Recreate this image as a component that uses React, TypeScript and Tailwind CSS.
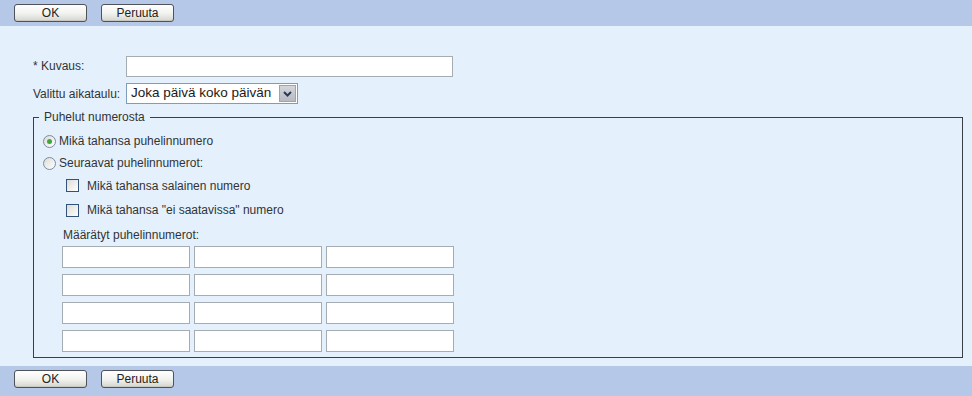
const font = { fontFamily: '"Liberation Sans", Arial, sans-serif' };

function Btn({ label }: { label: string }) {
  return (
    <button className="w-[73px] h-[18px] rounded-[3px] border border-[#4f5259] bg-gradient-to-b from-white via-[#f3f3f0] to-[#d6d6d0] text-[12px] leading-none text-[#222] flex items-center justify-center shadow-[inset_0_-1px_0_#c9c9c2]">
      {label}
    </button>
  );
}

function Bar({ h, pt }: { h: string; pt: string }) {
  return (
    <div className={`${h} ${pt} bg-[#b5c8e8] flex gap-[14px] pl-[14px]`}>
      <Btn label="OK" />
      <Btn label="Peruuta" />
    </div>
  );
}

function Radio({ checked }: { checked?: boolean }) {
  return (
    <span className="w-[13px] h-[13px] rounded-full border border-[#7a8c9e] bg-gradient-to-br from-[#dcdcd6] to-white flex items-center justify-center shrink-0">
      {checked && <span className="w-[5px] h-[5px] rounded-full bg-[#3fa63b]" />}
    </span>
  );
}

function Check() {
  return (
    <span className="w-[13px] h-[13px] border border-[#33527a] bg-gradient-to-br from-[#dcdcd6] to-white shrink-0" />
  );
}

function Field() {
  return <div className="h-[22px] w-[128px] border border-[#a5acb2] bg-white" />;
}

export default function App() {
  const rows = [0, 1, 2, 3];
  return (
    <div className="w-[972px] h-[396px] flex flex-col bg-[#e4f1fd] text-[12px] text-[#333]" style={font}>
      <Bar h="h-[26px]" pt="pt-[4px]" />

      <div className="flex-1 flex flex-col">
        <div className="mt-[30px] flex items-center h-[20px]">
          <span className="w-[126px] pl-[33px] shrink-0">* Kuvaus:</span>
          <div className="w-[327px] h-[21px] border border-[#a5acb2] bg-white" />
        </div>

        <div className="mt-[7px] flex items-center h-[21px]">
          <span className="w-[126px] pl-[33px] shrink-0 whitespace-nowrap">Valittu aikataulu:</span>
          <div className="w-[172px] h-[21px] border border-[#7f9db9] bg-white flex items-center">
            <span className="flex-1 pl-[4px] text-[13.5px] text-[#1a1a1a] whitespace-nowrap overflow-hidden">Joka päivä koko päivän</span>
            <span className="w-[17px] h-[17px] mr-[1px] bg-gradient-to-b from-[#d4d6dc] to-[#b7bac2] border border-[#9ea3ad] flex items-center justify-center shrink-0">
              <svg width="9" height="6" viewBox="0 0 9 6">
                <path d="M1 1 L4.5 4.5 L8 1" fill="none" stroke="#2c3a55" strokeWidth="2" />
              </svg>
            </span>
          </div>
        </div>

        <fieldset className="ml-[33px] mt-[6px] w-[930px] border border-[#3b3e44] pt-[6px] pb-[5px]">
          <legend className="ml-[5px] px-[5px] leading-[14px]">Puhelut numerosta</legend>

          <div className="h-[22px] flex items-center pl-[9px] gap-[3px]">
            <Radio checked />
            <span>Mikä tahansa puhelinnumero</span>
          </div>
          <div className="h-[22px] flex items-center pl-[9px] gap-[3px]">
            <Radio />
            <span>Seuraavat puhelinnumerot:</span>
          </div>
          <div className="h-[23px] flex items-center pl-[32px] gap-[8px]">
            <Check />
            <span>Mikä tahansa salainen numero</span>
          </div>
          <div className="h-[26px] flex items-center pl-[32px] gap-[8px]">
            <Check />
            <span>Mikä tahansa "ei saatavissa" numero</span>
          </div>
          <div className="h-[23px] flex items-center pl-[29px]">Määrätyt puhelinnumerot:</div>

          <div className="pl-[28px] flex flex-col gap-[6px]">
            {rows.map((r) => (
              <div key={r} className="flex gap-[4px]">
                <Field />
                <Field />
                <Field />
              </div>
            ))}
          </div>
        </fieldset>
      </div>

      <Bar h="h-[30px]" pt="pt-[4px]" />
    </div>
  );
}
